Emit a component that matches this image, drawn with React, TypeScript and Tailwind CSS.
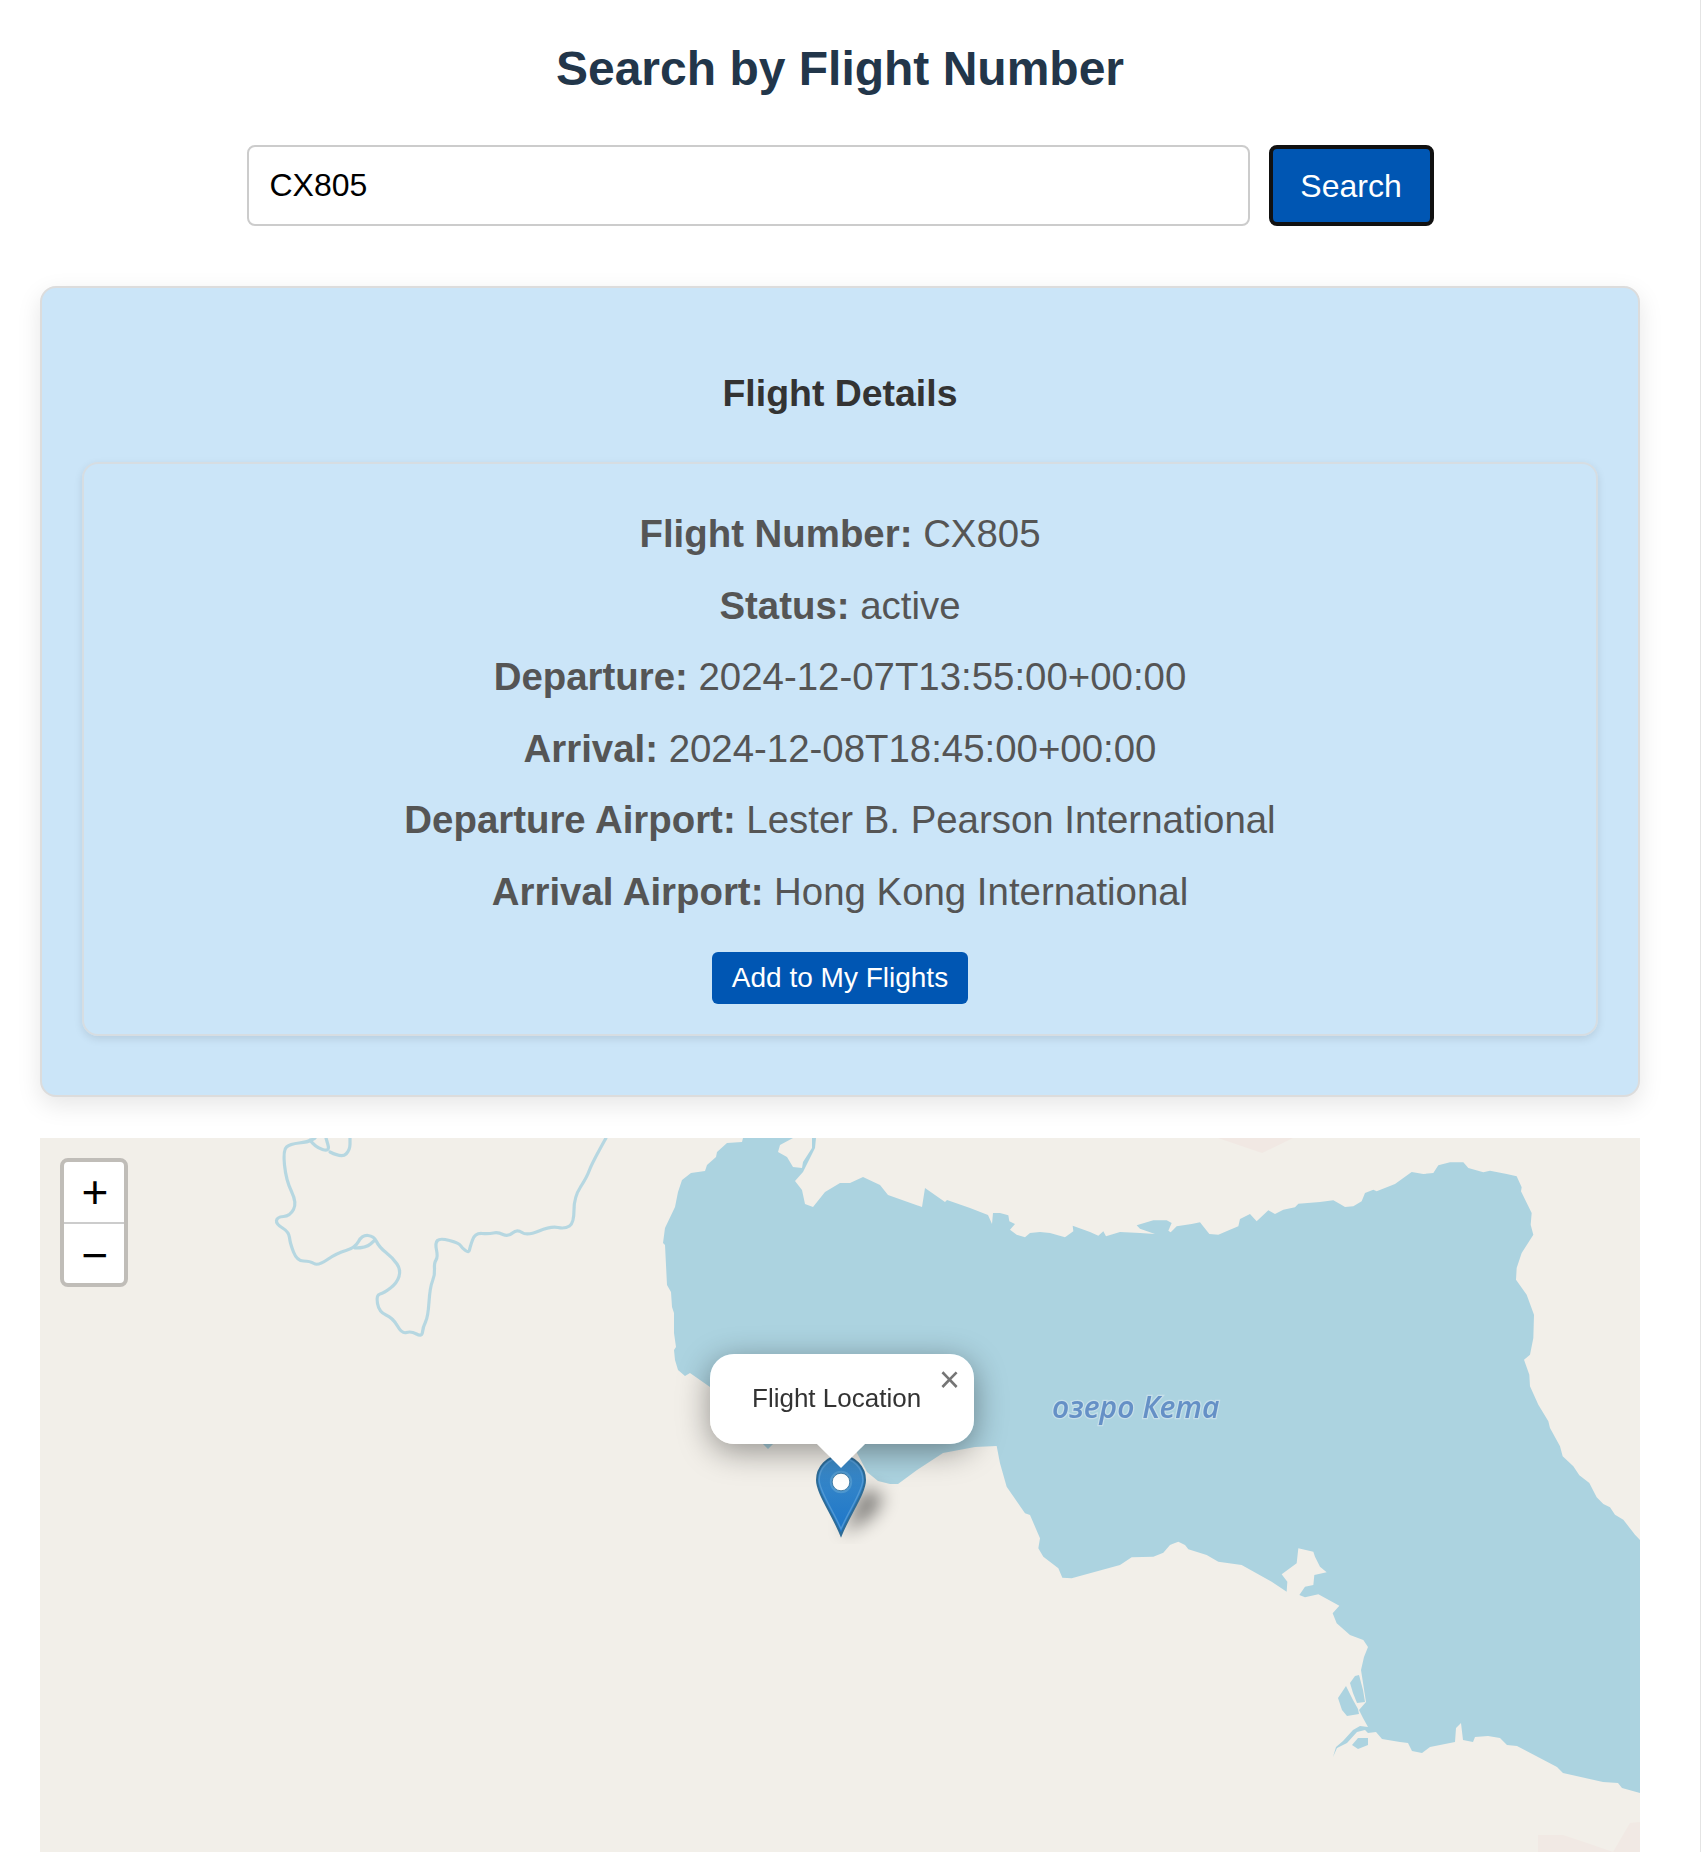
const FONT = "font-['Liberation_Sans',Arial,sans-serif]";

const z3 = (ox: number, oy: number, p: number[][]) => p.map(([x, y]) => [ox + x / 3, oy + y / 3]);

const lake: number[][] = [
  [743,1138],[742,1142],[727,1143],[717,1152],[716,1157],[707,1165],[705,1171],[691,1173],[682,1180],[678,1192],[675,1207],[665,1228],[663,1243],[665,1245],[667,1285],[671,1292],[672,1307],[674,1313],[674,1333],[676,1347],[674,1350],[675,1360],[678,1370],[685,1376],[690,1373],[710,1387],
  [752,1440],[762,1443],[768,1449],[774,1443],[857,1443],[857,1453],[867,1472],[878,1481],[890,1484],[898,1484],[917,1470],[943,1453],[975,1447],
  ...z3(980, 1440, [[50,18],[60,70],[80,140],[135,220],[150,225],[180,295],[175,325],[190,350],[235,385],[247,413],[275,415],[420,375],[455,352],[520,350],[550,338],[570,315],[595,305],[615,315],[625,328],[680,345],[715,365],[785,375],[875,425],[920,455],[922,425],[905,403],[950,370],[955,325],[1000,335],[1005,350],[1020,380],[1040,397],[1003,405],[1000,435],[975,440],[958,465],[975,472],[1015,463],[1078,497],[1058,520],[1070,550],[1110,585],[1150,600]]),
  [1368,1647],[1364,1657],[1361,1670],[1366,1702],[1359,1710],[1363,1718],[1368,1727],[1360,1726],[1353,1730],[1343,1741],[1336,1747],[1333,1757],[1337,1748],[1347,1743],[1357,1732],[1365,1730],[1368,1733],[1376,1732],[1382,1739],[1400,1742],[1408,1743],[1412,1751],[1422,1753],[1430,1747],[1445,1744],[1455,1742],[1456,1728],[1461,1723],[1463,1740],[1473,1742],[1475,1737],[1488,1736],[1500,1738],[1507,1745],[1517,1746],[1557,1767],[1563,1773],[1603,1782],[1618,1783],[1622,1788],[1640,1793],
  [1640,1540],
  ...z3(1340, 1138, [[885,1190],[850,1145],[825,1130],[810,1108],[790,1098],[770,1078],[748,1035],[718,1012],[700,985],[668,955],[660,925],[630,870],[625,850],[595,800],[570,745],[568,710],[552,665],[570,650],[580,600],[582,530],[560,470],[528,425],[530,390],[545,345],[580,290],[572,260],[575,225],[543,160],[545,148],[530,115],[500,108],[450,98],[430,103],[385,90],[370,73],[330,73],[295,82],[280,105],[250,108],[215,102],[165,138],[110,160],[100,155],[75,165],[65,190],[40,205],[15,207],[0,198]]),
  ...z3(1000, 1138, [[1000,187],[960,192],[895,197],[885,208],[850,215],[825,228],[805,217],[770,250],[750,228],[720,243],[715,265],[690,275],[655,290],[628,288],[600,253],[575,258],[530,265],[512,283],[505,278],[515,255],[500,247],[460,247],[410,262],[420,272],[465,288],[420,285],[360,282],[318,295],[310,280],[295,293],[270,282],[218,263],[220,280],[195,298],[150,285],[120,282],[90,285],[75,298],[50,290],[30,275],[45,258],[28,250],[25,232],[0,225]]),
  [993,1213],[992,1224],[988,1215],[970,1208],[947,1200],[945,1202],[925,1188],[922,1207],[888,1195],[880,1185],[863,1177],[850,1183],[840,1183],[825,1192],[813,1207],[805,1204],[802,1190],[795,1181],[803,1172],[815,1148],[816,1138],[812,1138],[812,1148],[803,1162],[802,1168],[793,1167],[787,1157],[778,1152],[780,1145],[793,1138],
];

const river: number[][] = [
  [606,1138],[592,1163],[587,1177],[574,1197],[574,1223],[565,1229],[551,1226],[527,1236],[517,1229],[508,1237],[498,1232],[489,1234],[475,1233],[470,1247],[469,1253],[462,1248],[459,1243],[440,1238],[435,1243],[438,1257],[434,1263],[435,1275],[430,1287],[428,1317],[423,1327],[422,1337],[411,1331],[402,1334],[393,1318],[379,1312],[376,1295],[384,1293],[397,1283],[401,1270],[393,1258],[379,1247],[374,1236],[362,1235],[355,1248],[337,1253],[318,1266],[310,1261],[297,1261],[290,1243],[289,1232],[276,1224],[277,1217],[290,1216],[297,1203],[286,1180],[283,1150],[290,1144],[308,1142],[315,1138],
];

const pts = (p: number[][]) => p.map((q) => q.join(",")).join(" ");

const smooth = (p: number[][]) => {
  let d = `M${p[0][0]} ${p[0][1]}`;
  for (let i = 1; i < p.length - 1; i++) {
    const mx = (p[i][0] + p[i + 1][0]) / 2;
    const my = (p[i][1] + p[i + 1][1]) / 2;
    d += ` Q${p[i][0]} ${p[i][1]} ${mx} ${my}`;
  }
  const l = p[p.length - 1];
  return d + ` L${l[0]} ${l[1]}`;
};

function MapBase() {
  return (
    <svg viewBox="40 1138 1600 714" className="absolute inset-0 h-full w-full" aria-hidden="true">
      <rect x="40" y="1138" width="1600" height="714" fill="#f2efe9" />
      <polygon points="1218,1138 1293,1138 1262,1153" fill="#f1e8e3" />
      <polygon points="1538,1852 1538,1835 1563,1835 1587,1843 1613,1852" fill="#f1e9e4" />
      <polygon points="1613,1852 1630,1823 1640,1822 1640,1852" fill="#f1e9e4" />
      <g className="blur-[0.6px]">
        <polygon points={pts(lake)} fill="#acd3e0" />
        <polygon points="1350,1683 1355,1676 1359,1675 1363,1690 1365,1702 1357,1703 1353,1693" fill="#acd3e0" />
        <polygon points="1338,1698 1346,1686 1353,1700 1358,1709 1359,1714 1347,1716 1342,1710" fill="#acd3e0" />
        <polygon points="1352,1745 1358,1738 1368,1738 1368,1745 1358,1749" fill="#acd3e0" />
        <g fill="none" stroke="#acd3e0" strokeWidth="3.2" strokeLinecap="round" opacity="0.85">
          <path d={smooth(river)} />
          <path d={smooth([[355,1248],[366,1248],[375,1240]])} />
          <path d={smooth([[310,1140],[315,1147],[330,1152],[326,1138]])} />
          <path d={smooth([[330,1152],[342,1158],[350,1150],[350,1138]])} />
        </g>
      </g>
      <text
        x="1052"
        y="1418"
        fill="#6590c6"
        stroke="#c6dfe9"
        strokeWidth="2.5"
        paintOrder="stroke"
        fontSize="30"
        fontStyle="italic"
        fontWeight="600"
        fontFamily="'Open Sans', sans-serif"
        className="blur-[0.3px]"
      >
        озеро Кета
      </text>
    </svg>
  );
}

function Marker() {
  return (
    <svg
      viewBox="816 1456 100 90"
      className="absolute left-[776px] top-[316px] h-[90px] w-[100px]"
      aria-hidden="true"
    >
      <defs>
        <linearGradient id="pin" x1="0" y1="0" x2="0" y2="1">
          <stop offset="0" stopColor="#3f8cc8" />
          <stop offset="1" stopColor="#1b75c9" />
        </linearGradient>
        <filter id="pinShadow" x="-80%" y="-80%" width="260%" height="260%">
          <feGaussianBlur stdDeviation="9" />
        </filter>
      </defs>
      <polygon points="843,1536 872,1518 884,1498 864,1490" fill="#000" opacity="0.5" filter="url(#pinShadow)" />
      <g transform="translate(816 1457) scale(2)">
        <path
          d="M12.5 .5C5.6 .5 .5 6 .5 12.5C.5 19 8 29 12.5 40C17 29 24.5 19 24.5 12.5C24.5 6 19.4 .5 12.5 .5Z"
          fill="url(#pin)"
          stroke="#2e6c97"
          strokeWidth="1"
        />
        <path
          d="M12.5 1.6C6.4 1.6 1.6 6.6 1.6 12.5C1.6 18 8.5 27.5 12.5 37C16.5 27.5 23.4 18 23.4 12.5C23.4 6.6 18.6 1.6 12.5 1.6Z"
          fill="none"
          stroke="#5fa3d8"
          strokeWidth="0.7"
          opacity="0.7"
        />
        <circle cx="12.5" cy="13.5" r="5.6" fill="#5a9fd2" opacity="0.7" />
        <circle cx="12.5" cy="13.5" r="4.4" fill="#ffffff" stroke="#2e6c97" strokeWidth="0.4" />
      </g>
    </svg>
  );
}

function Row({ label, value }: { label: string; value: string }) {
  return (
    <p className="text-[38.4px] leading-[44px] text-[#555555]">
      <strong className="font-bold">{label}</strong> {value}
    </p>
  );
}

export default function App() {
  return (
    <div className={`h-[1852px] w-[1701px] overflow-hidden border-r border-[#e4e4e4] bg-white ${FONT}`}>
      <div className="w-[1680px] px-10 pt-[41px]">
        <h1 className="text-center text-[48px] font-bold leading-[55px] text-[#22364a]">Search by Flight Number</h1>

        <div className="mt-[49px] flex items-stretch justify-center gap-[19px]">
          <input
            readOnly
            value="CX805"
            className="h-[81px] w-[1003px] rounded-[8px] border-2 border-[#cccccc] bg-white px-[21px] text-[32px] text-black outline-none"
          />
          <button className="h-[81px] w-[165px] rounded-[8px] border-4 border-[#111111] bg-[#0056b3] text-[32px] text-white">
            Search
          </button>
        </div>

        <section className="mt-[60px] h-[811px] rounded-[16px] border-2 border-[#dcdcdc] bg-[#cbe5f8] px-[40px] pt-[84px] shadow-[0_8px_24px_rgba(0,0,0,0.1)]">
          <h3 className="text-center text-[37.44px] font-bold leading-[43px] text-[#333333]">Flight Details</h3>
          <div className="mt-[47px] flex h-[574px] flex-col items-center rounded-[16px] border-2 border-[#d6dde2] px-4 pt-[48px] text-center shadow-[0_3px_8px_rgba(0,0,0,0.1)]">
            <div className="flex flex-col gap-[27.6px]">
              <Row label="Flight Number:" value="CX805" />
              <Row label="Status:" value="active" />
              <Row label="Departure:" value="2024-12-07T13:55:00+00:00" />
              <Row label="Arrival:" value="2024-12-08T18:45:00+00:00" />
              <Row label="Departure Airport:" value="Lester B. Pearson International" />
              <Row label="Arrival Airport:" value="Hong Kong International" />
            </div>
            <button className="mt-[38px] h-[52px] w-[256px] rounded-[6px] bg-[#0056b3] text-[28px] text-white">
              Add to My Flights
            </button>
          </div>
        </section>

        <div className="relative mt-[41px] h-[714px] w-[1600px] overflow-hidden">
          <MapBase />

          <div className="absolute left-5 top-5 w-[68px] rounded-[8px] border-4 border-[#c0bdb8] bg-white">
            <div className="flex h-[62px] items-center justify-center rounded-t-[4px] border-b-2 border-[#cccccc] pl-[2px] text-[46px] leading-none text-black">
              +
            </div>
            <div className="flex h-[59px] items-center justify-center pl-[2px] pt-[3px] text-[46px] leading-none text-black">−</div>
          </div>

          <Marker />

          <div className="absolute left-[670px] top-[216px] h-[90px] w-[264px]">
            <div className="absolute inset-0 rounded-[24px] shadow-[0_7px_32px_rgba(0,0,0,0.4)]" />
            <div className="absolute left-[114px] top-[73px] h-[34px] w-[34px] rotate-45 bg-white" />
            <div className="absolute inset-0 rounded-[24px] bg-white" />
            <p className="absolute left-[42px] top-[29px] text-[26px] leading-[30px] text-[#333333]">Flight Location</p>
            <span className="absolute right-[14px] top-[8px] text-[36px] leading-[36px] text-[#757575]">×</span>
          </div>
        </div>
      </div>
    </div>
  );
}
